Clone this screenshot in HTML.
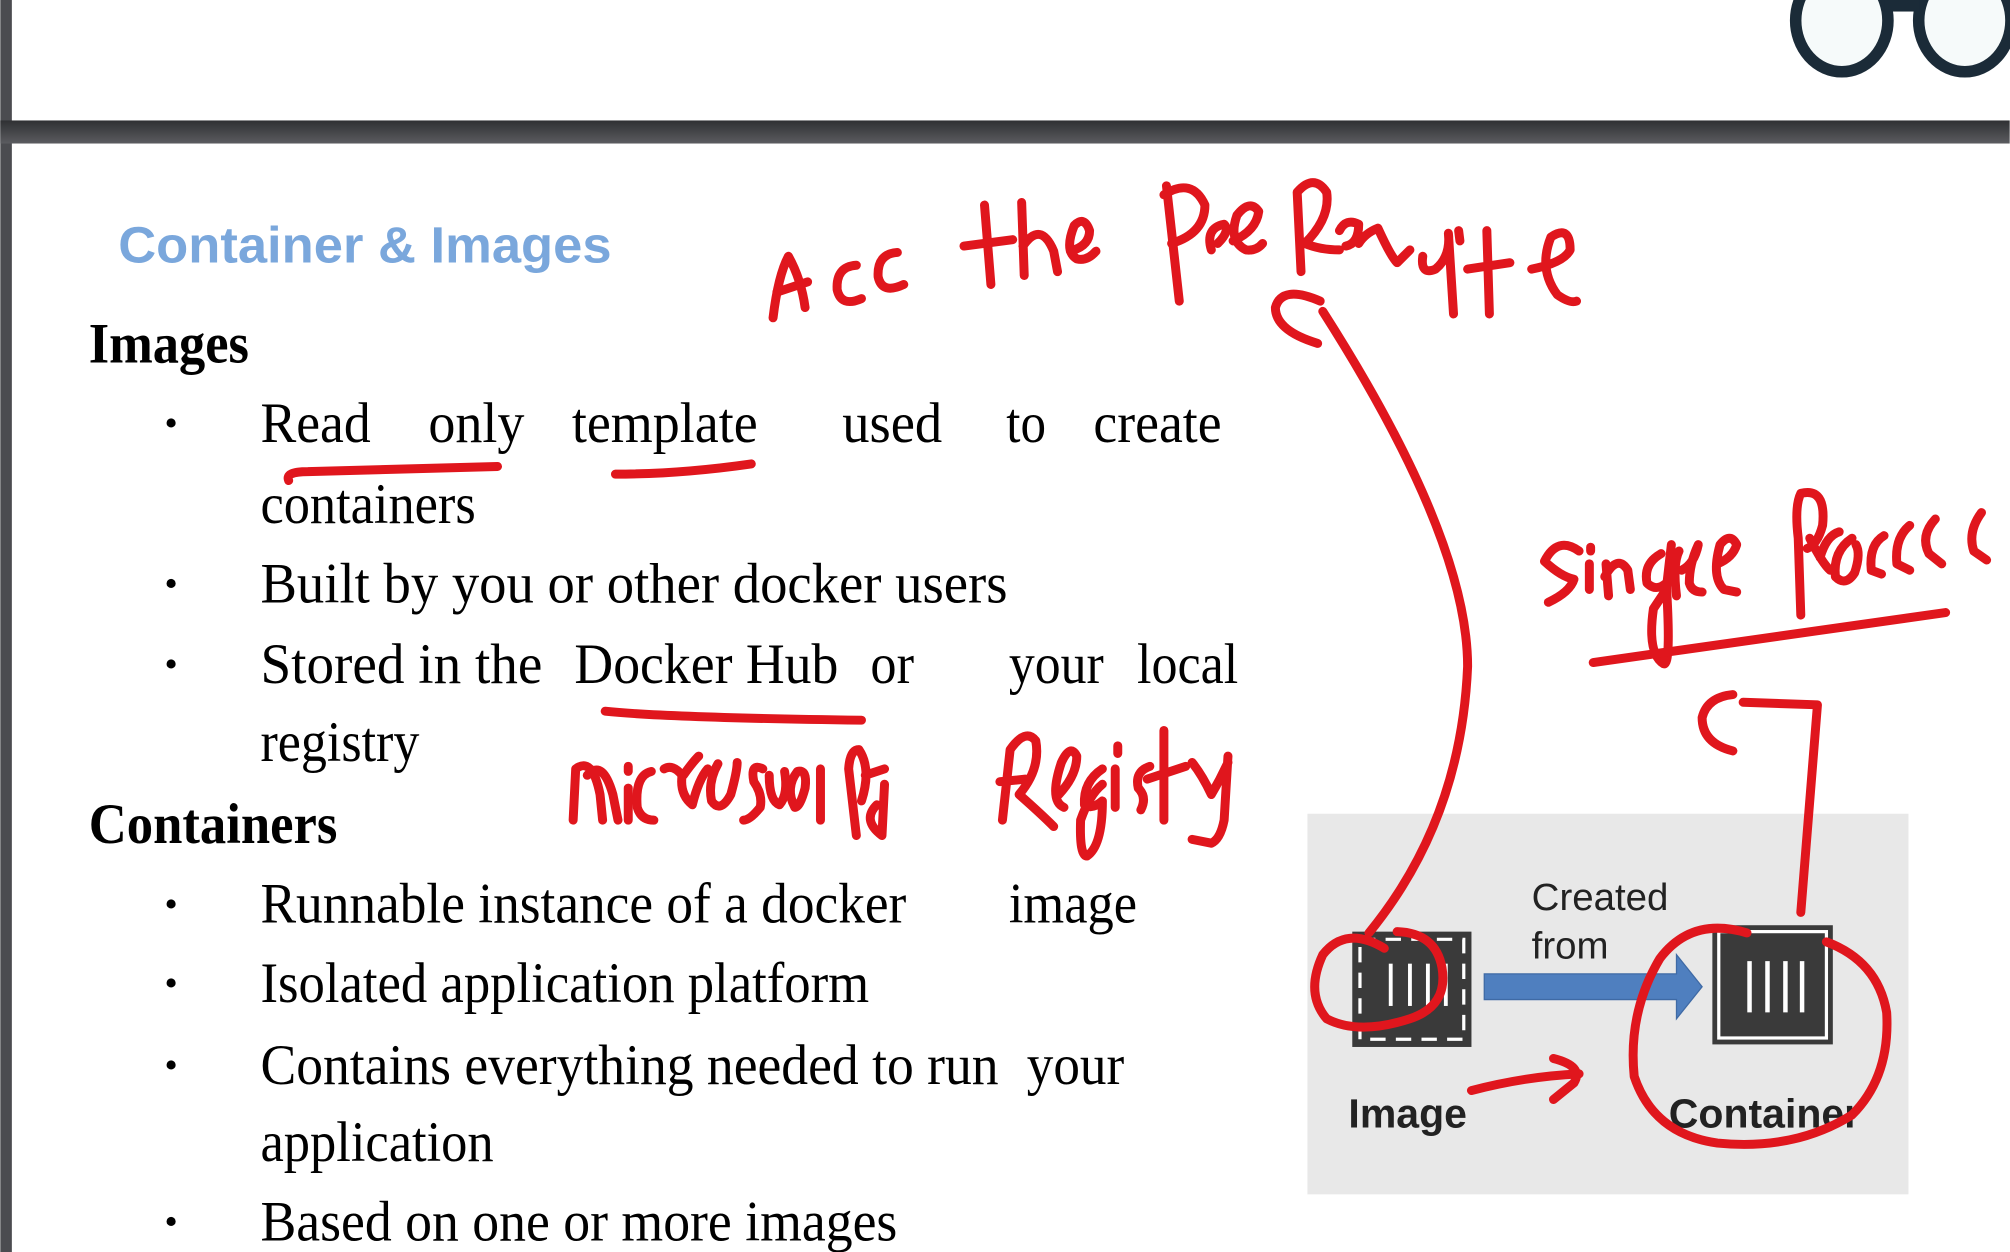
<!DOCTYPE html>
<html><head><meta charset="utf-8"><style>html,body{margin:0;padding:0;background:#fff;overflow:hidden}svg{display:block}</style></head>
<body>
<svg width="2010" height="1252" viewBox="0 0 1568 977" xmlns="http://www.w3.org/2000/svg">
<defs>
<linearGradient id="gap" x1="0" y1="0" x2="0" y2="1"><stop offset="0" stop-color="#2f3033"/><stop offset="1" stop-color="#5b5c60"/></linearGradient>
</defs>
<rect width="1568" height="977" fill="#fff"/>
<rect x="0" y="0" width="9" height="977" fill="#4b4c50"/>
<rect x="0" y="94" width="1568" height="18" fill="url(#gap)"/>
<g fill="#f6fafa" stroke="#1b2b38" stroke-width="9">
<ellipse cx="1437" cy="16" rx="36" ry="40"/>
<ellipse cx="1533" cy="16" rx="36" ry="40"/>
</g>
<rect x="1470" y="0" width="28" height="9" fill="#1b2b38"/>

<text x="92" y="205" font-family="Liberation Sans, sans-serif" font-weight="bold" font-size="40" fill="#7aa7dc" textLength="385" lengthAdjust="spacingAndGlyphs">Container &amp; Images</text>

<g font-family="Liberation Serif, serif" font-size="45" fill="#000">
<text x="69" y="283" font-weight="bold" textLength="125" lengthAdjust="spacingAndGlyphs">Images</text>
<text x="69" y="658" font-weight="bold" textLength="194" lengthAdjust="spacingAndGlyphs">Containers</text>
<g font-size="30">
<text x="128" y="340">•</text><text x="128" y="465">•</text><text x="128" y="528">•</text>
<text x="128" y="715">•</text><text x="128" y="777">•</text><text x="128" y="841">•</text><text x="128" y="963">•</text>
</g>
<text x="203" y="345" textLength="86" lengthAdjust="spacingAndGlyphs">Read</text>
<text x="334" y="345" textLength="75" lengthAdjust="spacingAndGlyphs">only</text>
<text x="446" y="345" textLength="145" lengthAdjust="spacingAndGlyphs">template</text>
<text x="657" y="345" textLength="78" lengthAdjust="spacingAndGlyphs">used</text>
<text x="785" y="345" textLength="31" lengthAdjust="spacingAndGlyphs">to</text>
<text x="853" y="345" textLength="100" lengthAdjust="spacingAndGlyphs">create</text>
<text x="203" y="408" textLength="168" lengthAdjust="spacingAndGlyphs">containers</text>
<text x="203" y="470" textLength="583" lengthAdjust="spacingAndGlyphs">Built by  you  or  other docker users</text>
<text x="203" y="533" textLength="220" lengthAdjust="spacingAndGlyphs">Stored in the</text>
<text x="448" y="533" textLength="206" lengthAdjust="spacingAndGlyphs">Docker Hub</text>
<text x="679" y="533" textLength="34" lengthAdjust="spacingAndGlyphs">or</text>
<text x="787" y="533" textLength="74" lengthAdjust="spacingAndGlyphs">your</text>
<text x="887" y="533" textLength="79" lengthAdjust="spacingAndGlyphs">local</text>
<text x="203" y="594" textLength="124" lengthAdjust="spacingAndGlyphs">registry</text>
<text x="203" y="720" textLength="504" lengthAdjust="spacingAndGlyphs">Runnable instance of a docker</text>
<text x="787" y="720" textLength="100" lengthAdjust="spacingAndGlyphs">image</text>
<text x="203" y="782" textLength="475" lengthAdjust="spacingAndGlyphs">Isolated application platform</text>
<text x="203" y="846" textLength="576" lengthAdjust="spacingAndGlyphs">Contains everything needed  to  run</text>
<text x="801" y="846" textLength="76" lengthAdjust="spacingAndGlyphs">your</text>
<text x="203" y="906" textLength="182" lengthAdjust="spacingAndGlyphs">application</text>
<text x="203" y="968" textLength="497" lengthAdjust="spacingAndGlyphs">Based on  one or  more images</text>
</g>

<rect x="1020" y="635" width="469" height="297" fill="#e8e8e8"/>
<rect x="1055" y="727" width="93" height="90" fill="#3a3a3a"/>
<rect x="1061" y="733" width="81" height="78" fill="none" stroke="#fff" stroke-width="2.5" stroke-dasharray="12 8"/>
<g stroke="#fff" stroke-width="3"><line x1="1085" y1="752" x2="1085" y2="785"/><line x1="1100" y1="752" x2="1100" y2="785"/><line x1="1114" y1="752" x2="1114" y2="785"/><line x1="1128" y1="752" x2="1128" y2="785"/></g>
<rect x="1336" y="722" width="94" height="93" fill="#3a3a3a"/>
<rect x="1341" y="727" width="84" height="83" fill="none" stroke="#fff" stroke-width="2.5"/>
<g stroke="#fff" stroke-width="3.5"><line x1="1365" y1="750" x2="1365" y2="790"/><line x1="1379" y1="750" x2="1379" y2="790"/><line x1="1393" y1="750" x2="1393" y2="790"/><line x1="1406" y1="750" x2="1406" y2="790"/></g>
<polygon points="1158,760 1308,760 1308,745 1328,770 1308,795 1308,780 1158,780" fill="#4f7fbf" stroke="#3f6aa5" stroke-width="1"/>
<g font-family="Liberation Sans, sans-serif" fill="#222">
<text x="1195" y="710" font-size="30">Created</text>
<text x="1195" y="748" font-size="30">from</text>
<text x="1052" y="880" font-size="32" font-weight="bold">Image</text>
<text x="1302" y="880" font-size="32" font-weight="bold">Container</text>
</g>

<g fill="none" stroke="#e0161d" stroke-width="7" stroke-linecap="round" stroke-linejoin="round">
<path d="M603,248 Q607,215 615,200 Q625,218 628,240"/>
<path d="M606,228 L630,220"/>
<path d="M668,207 Q652,208 653,226 Q656,240 672,233"/>
<path d="M700,197 Q684,198 685,216 Q688,230 705,222"/>
<path d="M768,160 L773,222"/><path d="M752,192 L790,187"/>
<path d="M797,158 L799,215 M798,192 Q812,172 822,196 L825,212"/>
<path d="M835,196 Q850,192 850,180 Q846,168 838,176 Q830,196 840,202 Q848,204 855,196"/>
<path d="M910,145 L920,235"/>
<path d="M908,152 Q930,138 940,160 Q940,182 914,190"/>
<path d="M945,195 Q940,178 955,175 Q960,180 950,190"/>
<path d="M962,188 Q980,180 982,165 Q975,155 965,168 Q958,188 972,195 Q980,196 985,190"/>
<path d="M1015,212 L1012,150 Q1025,135 1035,150 Q1038,170 1018,190 Q1030,195 1045,195"/>
<path d="M1045,180 Q1050,170 1060,175 Q1060,190 1050,192 M1060,190 Q1065,182 1075,178 Q1085,200 1090,205 Q1095,200 1100,195"/>
<path d="M1110,200 Q1108,215 1120,210 Q1132,200 1130,182 L1134,245 M1138,180 L1139,188"/>
<path d="M1160,180 L1162,245 M1145,210 L1178,205"/>
<path d="M1195,210 Q1220,205 1225,195 Q1225,175 1210,185 Q1200,210 1215,230 Q1225,237 1230,235"/>
<path d="M1028,268 Q995,258 995,240 Q1000,222 1030,235"/>
<path d="M1032,243 Q1145,420 1145,520 Q1140,640 1068,728"/>
<path d="M1080,740 Q1050,722 1032,745 Q1018,775 1035,795 Q1060,808 1100,795 Q1130,785 1125,755 Q1120,728 1090,727"/>
<path d="M1148,851 Q1190,840 1232,838"/><path d="M1212,826 Q1236,832 1228,845 L1212,858"/>
<path d="M1232,430 Q1215,418 1205,438 Q1218,450 1228,452 Q1225,462 1208,470"/>
<path d="M1240,440 L1240,460 M1241,427 L1241,430"/>
<path d="M1253,440 L1255,465 M1252,450 Q1262,432 1270,445 L1272,460"/>
<path d="M1296,432 Q1282,440 1285,455 Q1292,462 1300,455 Q1304,520 1298,518 Q1285,510 1290,475 L1300,460 L1304,425"/>
<path d="M1308,465 Q1305,440 1310,430 M1312,445 Q1322,440 1325,425 Q1318,440 1318,455 Q1320,462 1328,462"/>
<path d="M1340,440 Q1352,435 1355,425 Q1350,415 1342,425 Q1335,450 1345,460 L1355,462"/>
<path d="M1405,480 L1403,420 Q1400,395 1405,385 Q1425,380 1422,410 Q1418,425 1410,428"/>
<path d="M1412,420 Q1422,440 1428,445 M1420,435 Q1425,418 1435,415"/>
<path d="M1445,420 Q1430,430 1432,450 Q1440,458 1447,447 Q1452,432 1448,425"/>
<path d="M1470,418 Q1458,425 1460,445 L1468,448"/>
<path d="M1490,410 Q1478,420 1480,440 L1490,445"/>
<path d="M1510,405 Q1498,418 1505,432 L1515,440"/>
<path d="M1546,400 Q1535,415 1540,430 L1550,437"/>
<path d="M1243,517 L1518,478"/>
<path d="M1352,586 Q1328,580 1328,560 Q1332,544 1352,542"/>
<path d="M1360,548 L1418,550 L1405,712"/>
<path d="M1363,728 Q1320,715 1295,748 Q1270,790 1275,840 Q1290,885 1340,892 Q1400,898 1445,870 Q1475,840 1472,790 Q1465,750 1425,735"/>
<path d="M225,375 Q222,368 240,368 L388,364"/>
<path d="M480,370 Q530,370 586,362"/>
<path d="M472,555 Q520,560 672,562"/>
<path d="M447,640 L449,600 Q462,590 468,620 L470,640 M458,605 Q470,592 478,620 L482,640"/>
<path d="M490,640 L490,615 M490,602 L490,598"/>
<path d="M508,602 Q495,605 497,630 Q500,640 510,640"/>
<path d="M518,600 Q525,596 532,605 Q530,620 540,628 Q545,608 552,600 M533,605 Q540,595 545,590"/>
<path d="M560,596 Q552,610 555,625 Q562,635 570,620 Q575,602 575,595"/>
<path d="M595,600 Q585,595 588,610 Q595,620 593,630 Q585,640 580,640"/>
<path d="M600,605 Q600,625 608,628 Q615,620 612,602"/>
<path d="M620,630 Q612,615 622,602 Q630,600 628,615 Q624,630 620,630 M640,600 L640,640"/>
<path d="M668,652 L662,600 Q663,585 670,585 Q680,600 672,625 M684,628 Q672,640 688,652 L690,612 M675,605 L690,600"/>
<path d="M782,640 L788,585 Q800,568 808,578 Q812,600 795,620 Q812,635 822,645 M780,610 L800,608"/>
<path d="M826,620 Q840,605 840,590 Q835,580 828,595 Q818,625 830,630"/>
<path d="M860,600 Q845,610 846,628 Q852,632 860,625 Q860,660 848,668 Q842,668 843,640 Q850,620 860,612"/>
<path d="M870,600 L870,630 M872,588 L872,582"/>
<path d="M897,598 Q885,602 888,615 Q895,622 890,632"/>
<path d="M908,570 L908,640 M895,608 L925,598"/>
<path d="M930,595 Q938,605 945,620 Q952,608 958,595 M958,590 L955,640 Q952,655 945,658 L930,655"/>
</g>
</svg>
</body></html>
